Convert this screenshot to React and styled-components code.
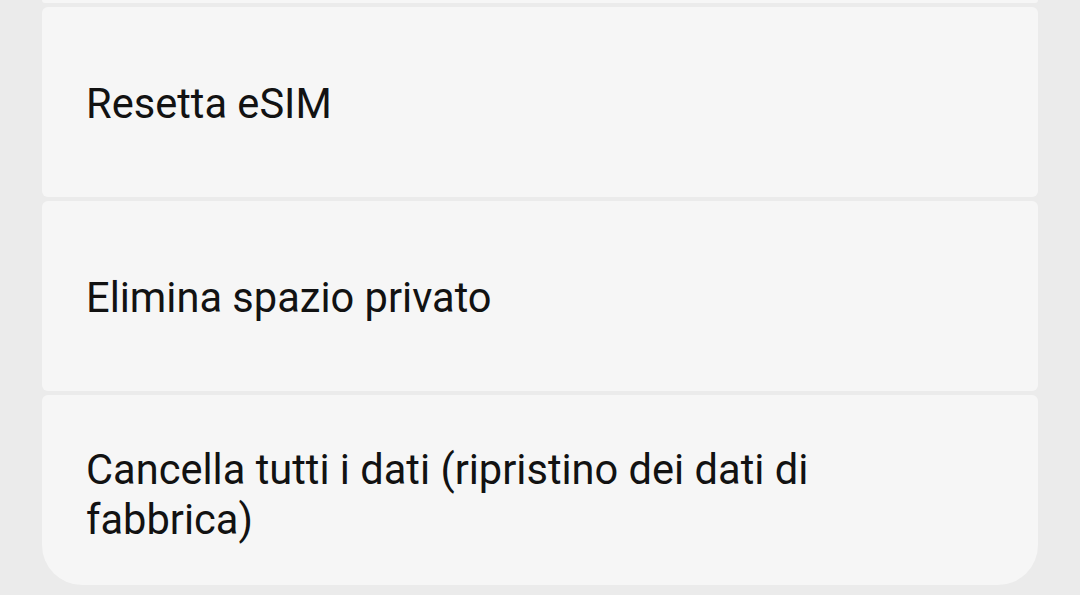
import React from "react";
import styled, { createGlobalStyle } from "styled-components";

const Global = createGlobalStyle`
  html, body {
    margin: 0;
    padding: 0;
    background: #ebebeb;
    font-family: Roboto, "Noto Sans", "Liberation Sans", sans-serif;
    -webkit-font-smoothing: antialiased;
  }
  #root { width: 1080px; height: 595px; overflow: hidden; }
`;

const List = styled.div`
  display: flex;
  flex-direction: column;
  gap: 4px;
  padding: 0 42px;
`;

const Sliver = styled.div`
  height: 3px;
  background: #f6f6f6;
  border-radius: 0 0 4px 4px;
`;

const Card = styled.button`
  all: unset;
  box-sizing: border-box;
  display: flex;
  align-items: center;
  height: 190px;
  padding: 0 140px 0 44px;
  background: #f6f6f6;
  border-radius: ${(p) => (p.$last ? "6px 6px 40px 40px" : "6px")};
  cursor: pointer;
`;

const Label = styled.span`
  font-size: 41.6px;
  line-height: 50px;
  color: #121212;
  letter-spacing: 0;
  padding-top: ${(p) => (p.$multi ? "10px" : "4px")};
`;

const items = [
  "Resetta eSIM",
  "Elimina spazio privato",
  "Cancella tutti i dati (ripristino dei dati di fabbrica)",
];

export default function App() {
  return (
    <>
      <Global />
      <List>
        <Sliver />
        {items.map((t, i) => (
          <Card key={t} $last={i === items.length - 1}>
            <Label $multi={i === 2}>{t}</Label>
          </Card>
        ))}
      </List>
    </>
  );
}
